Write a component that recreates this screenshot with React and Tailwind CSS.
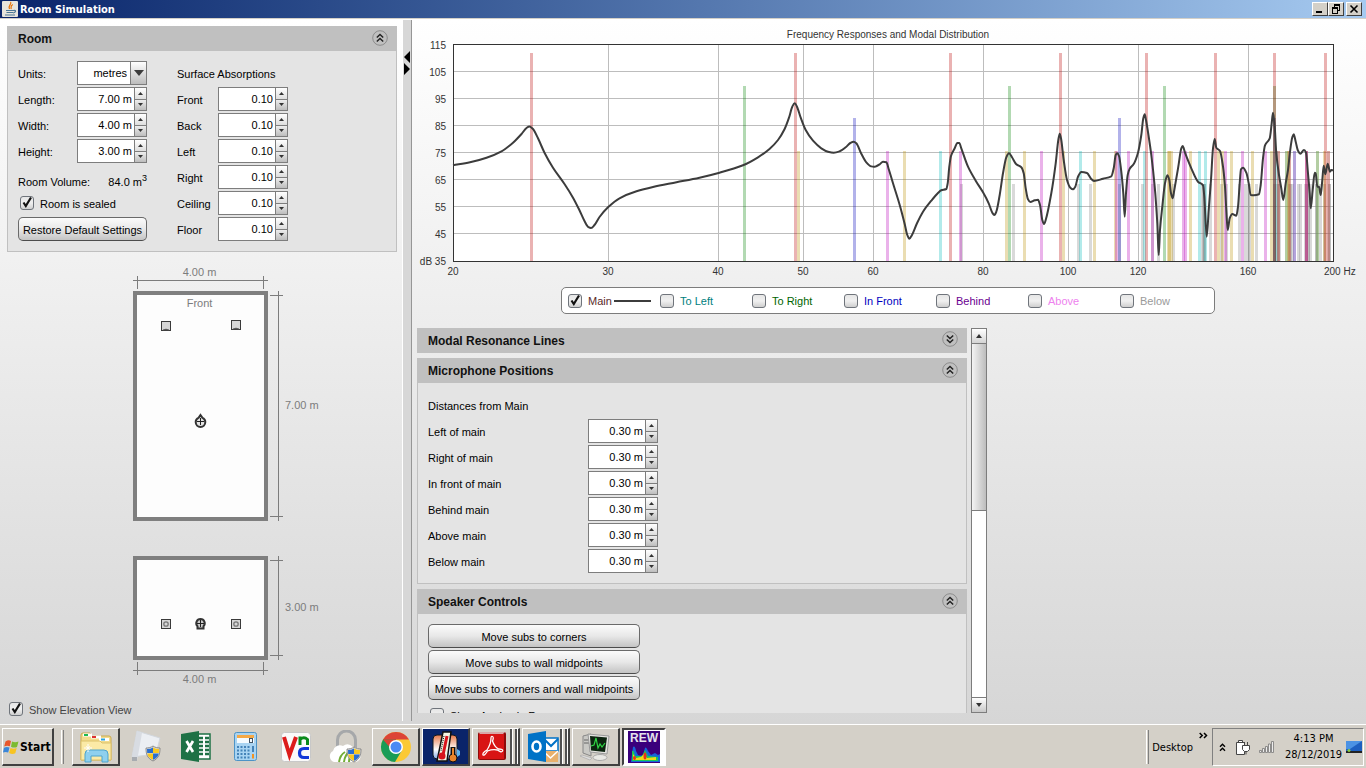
import React, { useId, useState } from "react";

/* ---------- Form controls ---------- */

function Tri({ up, big }) {
  return big ? (
    <svg width="10" height="6" viewBox="0 0 10 6">
      <path d={up ? "M0 6 5 0l5 6z" : "M0 0h10L5 6z"} fill="#3c3c3c" />
    </svg>
  ) : (
    <svg width="5" height="3" viewBox="0 0 5 3">
      <path d={up ? "M0 3 2.500 0 5 3z" : "M0 0h5L2.500 3z"} fill="#333" />
    </svg>
  );
}

function Spinner({ id, value, label }) {
  const [text, setText] = useState(value);
  return (
    <div className="flex h-6 w-[70px] shrink-0 border border-[#7d7d7d] bg-white">
      <input
        id={id}
        value={text}
        onChange={(e) => setText(e.target.value)}
        className="min-w-0 flex-1 bg-white pr-[2px] text-right text-[11px] text-black outline-none"
      />
      <div className="flex w-3 flex-col border-l border-[#7d7d7d]">
        <button aria-label={`Increase ${label}`} className="flex flex-1 items-center justify-center bg-linear-to-b from-white to-[#dedede]">
          <Tri up />
        </button>
        <button aria-label={`Decrease ${label}`} className="flex flex-1 items-center justify-center border-t border-[#7d7d7d] bg-linear-to-b from-[#eeeeee] to-[#bdbdbd]">
          <Tri />
        </button>
      </div>
    </div>
  );
}

function SpinRow({ label, value, labelClass }) {
  const id = useId();
  return (
    <div className="flex h-[26px] items-center">
      <label htmlFor={id} className={`shrink-0 pt-[2px] ${labelClass}`}>{label}</label>
      <Spinner id={id} value={value} label={label} />
    </div>
  );
}

function Check({ label, checked, color = "text-black", children }) {
  return (
    <label className={`flex items-center gap-[6px] ${color}`}>
      <span className="relative block size-[14px] shrink-0">
        <input
          type="checkbox"
          defaultChecked={checked}
          className="peer block size-[14px] appearance-none rounded-[3px] border border-[#6f747b] bg-linear-to-b from-[#e6e6e6] via-[#f0f0f0] to-[#cfcfcf]"
        />
        <svg viewBox="0 0 14 14" className="pointer-events-none absolute inset-0 hidden peer-checked:block">
          <path d="M3.500 6.500 5.800 10 11 1.500" fill="none" stroke="#111" strokeWidth="2.200" />
        </svg>
      </span>
      <span className="pt-[2px]">{label}</span>
      {children}
    </label>
  );
}

function PushButton({ children, className }) {
  return (
    <button className={`h-6 rounded-[5px] border border-[#6a6a6a] border-b-[#4c4c4c] bg-linear-to-b from-[#fbfbfb] via-[#e8e8e8] to-[#c4c4c4] pt-[2px] text-center whitespace-nowrap text-black ${className}`}>
      {children}
    </button>
  );
}

function Section({ title, open, children }) {
  return (
    <section className="shrink-0 border border-[#c0c0c0] bg-[#e4e4e4]">
      <header className={`flex items-center justify-between bg-[#c0c0c0] pr-2 pl-[10px] ${open ? "h-6" : "h-[23px]"}`}>
        <h2 className="text-[12px] font-bold text-[#111]">{title}</h2>
        <button aria-label={`Toggle ${title}`} className="mb-[3px] flex size-4 items-center justify-center">
          <svg width="16" height="16" viewBox="0 0 16 16" fill="none">
            <circle cx="8" cy="8" r="7.300" stroke="#8c8c8c" />
            <path
              d={open ? "M4.800 7.500 8 4.500l3.200 3M4.800 11.500 8 8.500l3.200 3" : "M4.800 4.500 8 7.500l3.200-3M4.800 8.500 8 11.500l3.200-3"}
              stroke="#222"
              strokeWidth="1.500"
            />
          </svg>
        </button>
      </header>
      {children}
    </section>
  );
}

/* ---------- Left side ---------- */

const SURFACES = ["Front", "Back", "Left", "Right", "Ceiling", "Floor"];

function RoomForm() {
  return (
    <Section title="Room" open>
      <div className="flex px-[10px] pt-[9px] pb-[9px]">
        <div className="flex w-[159px] flex-col">
          <div className="flex h-[26px] items-center">
            <label htmlFor="units" className="w-[59px] pt-[2px]">Units:</label>
            <div className="relative h-6 w-[70px] border border-[#7d7d7d] bg-white">
              <select id="units" defaultValue="metres" className="h-full w-full appearance-none pt-px pr-[19px] text-right text-[11px] text-black outline-none [text-align-last:right]">
                <option>metres</option>
                <option>feet</option>
              </select>
              <span className="pointer-events-none absolute inset-y-0 right-0 flex w-4 items-center justify-center border-l border-[#7d7d7d] bg-linear-to-b from-white to-[#bdbdbd]">
                <Tri big />
              </span>
            </div>
          </div>
          <SpinRow label="Length:" value="7.00 m" labelClass="w-[59px]" />
          <SpinRow label="Width:" value="4.00 m" labelClass="w-[59px]" />
          <SpinRow label="Height:" value="3.00 m" labelClass="w-[59px]" />
          <div className="flex h-[30px] w-[129px] items-center justify-between pt-[6px]">
            <span>Room Volume:</span>
            <span>84.0 m<sup className="-top-[5px] text-[9px]">3</sup></span>
          </div>
          <div className="flex h-[22px] items-center pb-1 pl-[2px]">
            <Check label="Room is sealed" checked />
          </div>
          <div className="flex h-[26px] items-center">
            <PushButton className="w-[129px]">Restore Default Settings</PushButton>
          </div>
        </div>
        <div className="flex flex-col">
          <div className="flex h-[26px] items-center pt-[2px]">Surface Absorptions</div>
          {SURFACES.map((s) => (
            <SpinRow key={s} label={s} value="0.10" labelClass="w-[41px]" />
          ))}
        </div>
      </div>
    </Section>
  );
}

function RoomViews() {
  return (
    <svg viewBox="0 0 200 430" className="w-[200px]" fontFamily="'Liberation Sans', Arial, sans-serif" fontSize="11" fill="#7c7c7c">
      <g stroke="#7c7c7c" fill="none" shapeRendering="crispEdges">
        <path d="M13 20.500h135M17.500 16v13M143.500 16v13M150 35.500h13M150 256.500h13M158.500 31v230" />
        <path d="M13 410.500h135M17.500 402v13M143.500 402v13M150 300.500h13M150 395.500h13M158.500 296v104" />
      </g>
      <g stroke="#7f7f7f" strokeWidth="4" fill="#fdfdfd" shapeRendering="crispEdges">
        <rect x="15" y="33" width="131" height="226" />
        <rect x="15" y="298" width="131" height="100" />
      </g>
      <text x="79.500" y="16" textAnchor="middle">4.00 m</text>
      <text x="79.500" y="47" textAnchor="middle">Front</text>
      <text x="165" y="149">7.00 m</text>
      <text x="165" y="351">3.00 m</text>
      <text x="79.500" y="423" textAnchor="middle">4.00 m</text>
      {[[41.5, 61.5], [111.5, 60.5]].map(([x, y]) => (
        <g key={x}>
          <rect x={x} y={y} width="9" height="9" fill="#d6d6d6" stroke="#3a3a3a" />
          <path d={`M${x + 1.5} ${y + 8.5}q3-2 6 0z`} fill="#555" stroke="#555" strokeWidth=".5" />
        </g>
      ))}
      {[41.5, 111.5].map((x) => (
        <g key={x} stroke="#3a3a3a">
          <rect x={x} y="359.500" width="9" height="9" fill="#d6d6d6" />
          <circle cx={x + 4.5} cy="364" r="2.200" fill="none" stroke="#777" strokeWidth="1.300" />
        </g>
      ))}
      <path d="M80.500 155l1.800 2.600q3 1.400 3 4.400a4.800 5 0 0 1-9.600 0q0-3 3-4.400z" fill="#e4e4e4" stroke="#333" strokeWidth="2" />
      <path d="M77 161.500h7M80.500 158v7" stroke="#222" fill="none" />
      <path d="M80.500 359a4.300 4.300 0 0 1 3 7.300v2.200h-6v-2.200a4.300 4.300 0 0 1 3-7.300z" fill="#ccc" stroke="#333" strokeWidth="2" />
      <path d="M77 363.500h7M80.500 360v7" stroke="#222" fill="none" />
    </svg>
  );
}

/* ---------- Frequency chart ---------- */

const fx = (f) => 880 * Math.log10(f / 20);

const SPEED = 343;
const DIMS = [7, 4, 3];

function roomModes() {
  const out = [];
  for (let l = 0; l < 9; l++)
    for (let w = 0; w < 6; w++)
      for (let h = 0; h < 5; h++) {
        const f = (SPEED / 2) * Math.hypot(l / DIMS[0], w / DIMS[1], h / DIMS[2]);
        if (f < 20 || f > 198.5) continue;
        const n = (l > 0) + (w > 0) + (h > 0);
        let color = "#808080";
        let top = 140;
        if (n === 1) {
          color = l ? "#b80000" : w ? "#008000" : "#0000b8";
          top = l ? 9 : w ? 42 : 74;
        } else if (n === 2) {
          color = !h ? "#b89000" : !w ? "#b800b8" : "#00b8b8";
          top = 107;
        }
        out.push({ key: `${l}${w}${h}`, x: Math.round(fx(f)) - 1, color, top, n });
      }
  return out.sort((a, b) => b.n - a.n);
}

const MODES = roomModes();

const CURVE = [
  [0, 121.3], [17, 118.3], [33.5, 113.7], [48.5, 107.3], [60, 98.7], [68.5, 90], [73.5, 84], [76.5, 82.5], [80, 85], [85, 94.3], [91.5, 108.7],
  [100, 123.7], [111.5, 140], [120, 153.7], [126, 165.3], [131.5, 177], [135.5, 183.2], [138, 184], [141.5, 181], [146.5, 173], [155, 163.3],
  [166.5, 154.3], [183.5, 147.3], [200, 143], [223.5, 138.3], [246.5, 133.7], [266.5, 128.7], [290, 121.3], [305, 113.3], [316.5, 105],
  [325, 96], [331.5, 85.3], [336, 73.7], [339.3, 62.7], [341.7, 59.3], [344, 62.7], [347.7, 73.7], [352.7, 86], [360, 96.7], [368.3, 104.3],
  [375, 107.7], [380.7, 108.7], [386.7, 107.3], [392.7, 103.3], [397.3, 99], [400.7, 97.7], [403.3, 99.3], [408.3, 109.7], [413.3, 118.3],
  [418.3, 122.4], [421, 122.8], [423.3, 122.2], [426.7, 120.3], [430, 117.7], [433.3, 118.3], [436, 126], [440, 139.3], [446.7, 161], [451.7, 180],
  [454.3, 191], [456.3, 194.7], [459, 191], [464, 179.3], [470, 167.7], [478.3, 156.7], [485, 149], [488.3, 146.3], [493.3, 145],
  [494.7, 139.3], [496.3, 122.7], [498, 112], [501.7, 104.3], [504.3, 99], [506.3, 99], [508.3, 104.3], [515, 122.7], [523.3, 137.7],
  [530, 148.3], [535.7, 159.3], [539.3, 168.7], [541.3, 171], [543.3, 167.7], [546.7, 151], [550, 129.3], [553.3, 113.3], [556, 109.3],
  [559, 113.3], [563.3, 120.3], [568.3, 123.3], [570.7, 129.3], [572.7, 144.3], [575, 155.3], [577.3, 158], [581.7, 156.3], [585, 155.7],
  [587, 161], [589.3, 176], [591, 180], [592.7, 176], [598.3, 149.3], [602.7, 119.3], [605.3, 96], [606.7, 89.7], [608, 94.3], [610.7, 116],
  [614, 136], [617.3, 143.7], [620, 145.3], [622.3, 142.7], [625, 132.7], [628.3, 128], [634, 129], [638, 134.7], [641, 137], [650, 134.7],
  [658.3, 132.3], [660.7, 124.3], [662.7, 111], [664.3, 109.3], [666, 112], [668.3, 127.7], [670.3, 149.3], [671.7, 172.7], [673, 149.3],
  [674.7, 131], [676.7, 124.7], [680.7, 120], [685, 108.7], [688.3, 91], [690.3, 74.3], [691.7, 70.3], [693, 76], [695.7, 92.7],
  [698.3, 111], [701.7, 142.7], [704.3, 179.3], [705.7, 211], [707, 186], [709.3, 162.7], [712, 139.3], [714.3, 131.3], [716.3, 136],
  [718, 149.3], [719.7, 154.3], [721.3, 146], [725.3, 122.7], [728.3, 104.3], [729.7, 102], [732, 108.7], [738.3, 124.3], [745, 137.7],
  [750, 141.3], [751.3, 152.7], [753.7, 192.7], [755.7, 166], [758, 136], [760, 104.3], [761.7, 95], [763.3, 103.7], [767, 107],
  [770, 122.7], [772, 142.7], [773.3, 166], [774.7, 186], [776.7, 174.3], [779.3, 170], [783.3, 171.7], [785, 162.7], [786.7, 139.3],
  [788, 125.3], [790, 123.7], [793.3, 128.7], [795.7, 139.3], [797.7, 151], [800.7, 151.3], [806, 150.3], [807.7, 141], [810, 114.3],
  [812, 101.3], [816.7, 94.3], [818.7, 79.3], [820, 68.7], [821.7, 82.7], [823.3, 109.3], [826, 131], [828.3, 144.3], [830.3, 156],
  [832.7, 139.3], [835, 126], [837, 107.7], [839.3, 93.3], [840.7, 90.3], [842.7, 97.7], [845, 106.7], [847.3, 109.7], [851, 106],
  [853, 108.7], [855, 129.3], [856.7, 149.3], [857.7, 164.3], [859.7, 146], [861.7, 128.7], [862.7, 129.3], [864.3, 142.7], [866, 142.7],
  [867.7, 151], [869.3, 136], [870.7, 121.7], [872.3, 130.3], [874.7, 119.7], [877, 127.7], [878.3, 126], [880, 126.3],
];

/* Cubic through every point; the tangent is flat wherever the curve turns. */
function smooth(pts) {
  const slope = (a, b) => (b[1] - a[1]) / (b[0] - a[0]);
  const m = pts.map((p, i) => {
    if (i === 0) return slope(p, pts[1]);
    if (i === pts.length - 1) return slope(pts[i - 1], p);
    const a = slope(pts[i - 1], p);
    const b = slope(p, pts[i + 1]);
    return a * b <= 0 ? 0 : (2 * a * b) / (a + b);
  });
  let d = `M${pts[0][0]} ${pts[0][1]}`;
  for (let i = 0; i < pts.length - 1; i++) {
    const [x0, y0] = pts[i];
    const [x1, y1] = pts[i + 1];
    const h = (x1 - x0) / 3;
    d += `C${(x0 + h).toFixed(2)} ${(y0 + m[i] * h).toFixed(2)} ${(x1 - h).toFixed(2)} ${(y1 - m[i + 1] * h).toFixed(2)} ${x1} ${y1}`;
  }
  return d;
}

const CURVE_PATH = smooth(CURVE);
const FREQS = [20, 30, 40, 50, 60, 80, 100, 120, 160];

function Chart() {
  return (
    <svg viewBox="0 0 954 260" className="block w-full shrink-0" fontFamily="'Liberation Sans', Arial, sans-serif" fontSize="10" fill="#333">
      <text x="476" y="18" textAnchor="middle">Frequency Responses and Modal Distribution</text>
      <g transform="translate(41 24)">
        <rect width="881" height="217" fill="#fff" />
        <g shapeRendering="crispEdges">
          {[27, 54, 81, 108, 135, 162, 189].map((y) => (
            <rect key={y} y={y} width="880" height="1" fill="#bdbdbd" />
          ))}
          {FREQS.slice(1).map((f) => (
            <rect key={f} x={Math.round(fx(f))} width="1" height="217" fill="#bdbdbd" />
          ))}
          {MODES.map((m) => (
            <rect key={m.key} x={m.x} y={m.top} width="3" height={217 - m.top} fill={m.color} fillOpacity="0.3" />
          ))}
          <rect x="0.500" y="0.500" width="880" height="217" fill="none" stroke="#333" />
        </g>
        <path d={CURVE_PATH} fill="none" stroke="#3c3c3c" strokeWidth="2" strokeLinejoin="round" />
        {[115, 105, 95, 85, 75, 65, 55, 45, 35].map((v, i) => (
          <text key={v} x="-7" y={5 + i * 27} textAnchor="end">{v === 35 ? "dB 35" : v}</text>
        ))}
        {FREQS.map((f) => (
          <text key={f} x={Math.round(fx(f))} y="231" textAnchor="middle">{f}</text>
        ))}
        <text x="871" y="231">200 Hz</text>
      </g>
    </svg>
  );
}

const LEGEND = [
  ["Main", "text-[#5a2a2a]"],
  ["To Left", "text-[#008080]"],
  ["To Right", "text-[#006400]"],
  ["In Front", "text-[#0000c0]"],
  ["Behind", "text-[#6a0090]"],
  ["Above", "text-[#ee82ee]"],
  ["Below", "text-[#9a9a9a]"],
];

function Legend() {
  return (
    <div className="mt-[7px] flex shrink-0 justify-center pr-[2px]">
      <div className="flex h-[27px] w-[654px] items-center rounded-[5px] border border-[#7c7c7c] bg-white pl-[6px]">
        {LEGEND.map(([label, color], i) => (
          <div key={label} className="w-[92px] shrink-0">
            <Check label={label} color={color} checked={i === 0}>
              {i === 0 && <span className="-ml-1 h-[2px] w-[37px] bg-[#3c3c3c]" />}
            </Check>
          </div>
        ))}
      </div>
    </div>
  );
}

/* ---------- Settings list ---------- */

const MICS = ["Left of main", "Right of main", "In front of main", "Behind main", "Above main", "Below main"];

function Settings() {
  return (
    <div className="mt-[14px] mb-[11px] flex min-h-0 w-full max-w-[575px] flex-1 gap-1 pl-[5px]">
      <div className="flex min-w-0 flex-1 flex-col gap-[5px] overflow-hidden">
        <Section title="Modal Resonance Lines" />
        <Section title="Microphone Positions" open>
          <div className="px-[10px] pt-[9px] pb-[9px]">
            <div className="flex h-[26px] items-center pt-[2px]">Distances from Main</div>
            {MICS.map((m) => (
              <SpinRow key={m} label={m} value="0.30 m" labelClass="w-[160px]" />
            ))}
          </div>
        </Section>
        <Section title="Speaker Controls" open>
          <div className="flex flex-col gap-[2px] px-[10px] pt-[10px] pb-[10px]">
            <PushButton className="w-[212px]">Move subs to corners</PushButton>
            <PushButton className="w-[212px]">Move subs to wall midpoints</PushButton>
            <PushButton className="w-[212px]">Move subs to corners and wall midpoints</PushButton>
            <div className="flex h-6 items-center pt-[2px] pl-[2px]">
              <Check label="Show Angles in Room" />
            </div>
          </div>
        </Section>
      </div>
      <div className="flex w-4 flex-col border border-[#7d7d7d] bg-white">
        <button aria-label="Scroll up" className="flex h-[15px] items-center justify-center border-b border-[#7d7d7d] bg-linear-to-b from-white to-[#d4d4d4]">
          <svg width="6" height="4"><path d="M0 4 3 0l3 4z" fill="#333" /></svg>
        </button>
        <div className="h-[167px] border-b border-[#7d7d7d] bg-linear-to-r from-[#f4f4f4] to-[#bdbdbd]" />
        <div className="flex-1" />
        <button aria-label="Scroll down" className="flex h-[15px] items-center justify-center border-t border-[#7d7d7d] bg-linear-to-b from-white to-[#c8c8c8]">
          <svg width="6" height="4"><path d="M0 0h6L3 4z" fill="#333" /></svg>
        </button>
      </div>
    </div>
  );
}

/* ---------- Window frame ---------- */

function FrameButton({ label, children }) {
  return (
    <button aria-label={label} className="flex h-[14px] w-4 items-center justify-center border border-t-white border-r-[#404040] border-b-[#404040] border-l-white bg-[#d4d0c8]">
      <svg width="12" height="10" viewBox="0 0 12 10" fill="none" stroke="#000" shapeRendering="crispEdges">{children}</svg>
    </button>
  );
}

function TitleBar() {
  return (
    <div className="flex h-[18px] shrink-0 items-center bg-linear-to-r from-[#0a246a] to-[#a6caf0] pr-1 pl-[2px]">
      <svg width="16" height="16" viewBox="0 0 16 16" fill="none">
        <rect width="16" height="16" rx="1" fill="#e8e4dc" />
        <path d="M8.500 1c2 2-3 3.500-1 7M10.800 3.500C8 5 9.500 6 9 8" stroke="#e76f00" strokeWidth="1.200" />
        <path d="M4 9.500h7.500M4.500 11.500h6.500M3 14h10M11.500 9.500c3-.5 2.500 2-.5 2.500" stroke="#4b7796" strokeWidth="1.200" />
      </svg>
      <h1 className="ml-[2px] flex-1 font-['DejaVu_Sans_Condensed','DejaVu_Sans',sans-serif] text-[11px] font-bold text-white">Room Simulation</h1>
      <FrameButton label="Minimize"><path d="M2 7.500h6M2 8.500h6" /></FrameButton>
      <FrameButton label="Restore"><path d="M4 1.500h6M4 .5h6M4.500 1v3M9.500 1v5H8M2 4.500h6M2 3.500h6M2.500 4v5h5V4" /></FrameButton>
      <span className="w-[2px]" />
      <FrameButton label="Close"><path d="M2.500 1.500l7 7M9.500 1.500l-7 7" strokeWidth="1.600" shapeRendering="auto" /></FrameButton>
    </div>
  );
}

/* ---------- Taskbar ---------- */

function Shield({ x, y }) {
  return (
    <g transform={`translate(${x} ${y})`}>
      <path d="M7 0c2 1.500 4.500 2 7 2 0 6-1 10-7 13C1 12 0 8 0 2c2.500 0 5-.5 7-2z" fill="#ddd" stroke="#777" strokeWidth=".8" />
      <path d="M7 1.500V7H1.200Q1 5 1 3 4.500 3 7 1.500z" fill="#2a6fd0" />
      <path d="M7 1.500V7h5.800q.2-2 .2-4-3.500 0-6-1.500z" fill="#f8c820" />
      <path d="M1.200 7.500H7v6.300Q2.200 12 1.200 7.500z" fill="#f8c820" />
      <path d="M12.800 7.500H7v6.300q4.800-1.800 5.800-6.300z" fill="#2a6fd0" />
    </g>
  );
}

const svgProps = { width: 34, height: 34, viewBox: "0 0 34 34", fill: "none" };

const Folder = () => (
  <svg {...svgProps}>
    <path d="M2 30V5q0-2 2-2h7l2 3h17q2 0 2 2v22z" fill="#f2dc8c" stroke="#c9a850" />
    <path d="M4 3.500h9v3H4z" fill="#fff" /><path d="M5 4h4v2H5z" fill="#1db954" />
    <path d="M12 5.500h10v3H12z" fill="#fff" /><path d="M13 6h4v2h-4z" fill="#d33" />
    <path d="M20 8h10v3H20z" fill="#fff" /><path d="M22 8.500h4v2h-4z" fill="#29a3dc" />
    <path d="M2 30V11h19l2 2h9v17z" fill="#fbeaa6" stroke="#dcc16a" />
    <path d="M6 32V24q0-4 4-4h15q4 0 4 4v8h-6v-6H12v6z" fill="#8fd0ee" stroke="#4fa4cc" />
    <path d="M9 14v8M5 18h8" stroke="#fff" />
    <path d="M7 16l4 4M11 16l-4 4" stroke="#fff" strokeWidth=".7" />
  </svg>
);

const Server = () => (
  <svg {...svgProps}>
    <path d="M8 1l-5 26 24-3 4-16z" fill="#eceff3" stroke="#d2d7dd" />
    <path d="M8 1 3 27v4h5l5-28z" fill="#d8dce2" /><path d="M3 27h5v4H3z" fill="#a7abb0" />
    <Shield x={17} y={16} />
  </svg>
);

const Excel = () => (
  <svg {...svgProps}>
    <path d="M18 4h13v25H18z" fill="#fff" stroke="#1e7145" strokeWidth="1.500" />
    <path d="M20 8h4M26 8h4M20 12h4M26 12h4M20 16h4M26 16h4M20 20h4M26 20h4M20 24h4M26 24h4" stroke="#1e7145" strokeWidth="2.500" />
    <path d="M2 4l18-3v31L2 29z" fill="#1e7145" />
    <path d="M7.500 11 14 22M14 11 7.500 22" stroke="#fff" strokeWidth="2.700" />
  </svg>
);

const Calc = () => (
  <svg {...svgProps}>
    <rect x="5.500" y="2.500" width="22" height="28" rx="2" fill="#a9d4f2" stroke="#4d93c6" />
    <path d="M8 5h17v3H8z" fill="#f5a947" /><path d="M8 8h17v5H8z" fill="#f5fbff" />
    <rect x="20.500" y="8.500" width="3" height="4" stroke="#456" />
    <path d="M8 17h14M8 20.500h14M8 24h14M8 27.500h14" stroke="#4583b8" strokeWidth="2" strokeDasharray="2 1.500" />
    <path d="M23 24h2v4.500h-2z" fill="#f39221" /><path d="M23 16h2v6h-2z" fill="#4583b8" />
  </svg>
);

const Vnc = () => (
  <svg {...svgProps}>
    <rect x="2.500" y="2.500" width="29" height="29" rx="3" fill="#fafafa" stroke="#c8c8c8" />
    <path d="M5 7 10.500 25 17 7" stroke="#dc1c1c" strokeWidth="4" />
    <path d="M21 15V6.500M21 9.500q4-3.500 7.500 0V15" stroke="#0a8a1c" strokeWidth="3" />
    <path d="M30 18.500h-5q-4.500 0-4.500 4.500t4.500 4.500h5" stroke="#1138d8" strokeWidth="3.200" />
  </svg>
);

const Vpn = () => (
  <svg {...svgProps}>
    <path d="M8.500 18V10a9 9 0 0 1 18 0v8" stroke="#a6a8aa" strokeWidth="3" />
    <path d="M5 32a6 6 0 0 1-1-11 7 7 0 0 1 10-5q5-4 10 1 9 1 8 8-1 7-6 7z" fill="#fff" />
    <path d="M10 32q1-7 6-10M15 32q1-8 7-12M20 32q0-5 3-8" stroke="#72ad36" strokeWidth="2" />
    <Shield x={18} y={17} />
  </svg>
);

const Chrome = () => (
  <svg {...svgProps}>
    <circle cx="17" cy="17" r="15" fill="#fbc934" />
    <path d="M17 17 4 9.500A15 15 0 0 1 30 9.500H17z" fill="#dc4437" />
    <path d="M4 9.500A15 15 0 0 0 16 32l6.500-11L17 17z" fill="#1a9c57" />
    <path d="M4 9.500 10.500 21 17 17V9.500z" fill="#1a9c57" />
    <path d="M4 9.500h13V17l-6.500 0z" fill="#dc4437" />
    <circle cx="17" cy="17" r="7" fill="#fff" /><circle cx="17" cy="17" r="5.500" fill="#4a8af4" />
  </svg>
);

const Thermo = () => (
  <svg {...svgProps}>
    <defs>
      <linearGradient id="heat" x1="0" y1="0" x2="0" y2="1"><stop stopColor="#e8794a" /><stop offset=".6" stopColor="#fff" /><stop offset="1" stopColor="#7fa8e8" /></linearGradient>
    </defs>
    <rect x="4" y="5" width="24" height="24" rx="4" fill="url(#heat)" stroke="#101820" />
    <path d="M14 2h8l-4 29H8z" fill="#f2f5e4" stroke="#111" strokeWidth="1.500" />
    <path d="M18 6 14 25" stroke="#d8141c" strokeWidth="3" /><circle cx="13" cy="26" r="3.500" fill="#d8141c" />
    <path d="M15 6l-3 15" stroke="#111" strokeDasharray="1 1" />
    <path d="M24 17v10" stroke="#111" strokeWidth="5" /><circle cx="24" cy="28" r="4" fill="#e8842a" stroke="#111" /><path d="M24 18v8" stroke="#e8842a" strokeWidth="2" />
    <path d="M28 19v8l3-2v-4z" fill="#5cb4f0" />
  </svg>
);

const Acrobat = () => (
  <svg {...svgProps}>
    <rect x="2" y="2" width="28" height="28" rx="2" fill="#8e0b0b" /><rect x="3" y="4" width="25" height="25" fill="#d81414" />
    <path d="M2 2h27l-2 2H4z" fill="#d8a8a8" />
    <path d="M7 25q-1-2 4-5 4-6 4-12 0-2 1.500-1.500t0 4.500q2 6 6 8 5 0 4 2t-5-1q-5-1-10 1-3 5-4.500 4z" stroke="#fff" strokeWidth="1.300" />
  </svg>
);

const Outlook = () => (
  <svg {...svgProps}>
    <path d="M18 8h14v13H18z" fill="#fff" stroke="#0072c6" strokeWidth="1.500" /><path d="M19 10l6 6 7-7" stroke="#0072c6" strokeWidth="2" />
    <path d="M17 21h15v11H17z" fill="#e8b06c" /><path d="M17 21l7.500 7 7.500-7" stroke="#fff" strokeWidth="1.500" />
    <path d="M2 4l18-3v31L2 29z" fill="#0072c6" />
    <ellipse cx="10.500" cy="16.500" rx="4" ry="5" stroke="#fff" strokeWidth="2.600" />
  </svg>
);

const Monitor = () => (
  <svg {...svgProps}>
    <path d="M4 6l8-2v22l-8-3z" fill="#c9c9c5" stroke="#888" /><path d="M5 10h5M5 13h5" stroke="#666" />
    <path d="M9 4l21 2 -2 18-17-2z" fill="#e4e4e0" stroke="#999" /><path d="M11 6l17 1.500-2 14.500-14-1.500z" fill="#0c2410" />
    <path d="M12 16l3-1 2-7 2 10 2-4 2 3 3-4" stroke="#2fd845" strokeWidth="1.200" />
    <ellipse cx="21" cy="27.500" rx="7" ry="3" fill="#e8e8e4" stroke="#aaa" /><path d="M3 25l10 3-2 2-10-4z" fill="#ddd" stroke="#999" strokeWidth=".5" />
  </svg>
);

const Rew = () => (
  <svg {...svgProps}>
    <rect x="1" y="1" width="32" height="32" fill="#3a007c" />
    <text x="17" y="12" textAnchor="middle" fill="#e4e4ec" fontFamily="'Liberation Sans', Arial, sans-serif" fontWeight="bold" fontSize="12">REW</text>
    <path d="M4 32q1-8 2-15 2-2 3 4l2 4q3 1 5 0l2-7q1-2 3 3l3 4 4-2 3 2 2-1v8z" fill="#1666d8" />
    <path d="M5 31V21q2-1 3 5l7 0 3-6 3 6 10 1v4z" fill="#18c858" />
    <path d="M6 30V24l3 4 5-1 3-3 3 4 9-1v3z" fill="#f0d818" />
    <ellipse cx="18" cy="26" rx="1.500" ry="3.500" fill="#e83418" /><ellipse cx="7.500" cy="28" rx="1.500" ry="2" fill="#e83418" />
  </svg>
);

const TASKS = [
  ["File Explorer", Folder, "raised"],
  ["Server Manager", Server, "flat"],
  ["Excel", Excel, "flat"],
  ["Calculator", Calc, "flat"],
  ["VNC Viewer", Vnc, "flat"],
  ["VPN Client", Vpn, "flat"],
  ["Chrome", Chrome, "raised"],
  ["Thermometer", Thermo, "navy"],
  ["Acrobat Reader", Acrobat, "stack"],
  ["Outlook", Outlook, "stack"],
  ["System Monitor", Monitor, "raised"],
  ["REW", Rew, "pressed"],
];

const RAISED = "border-t-white border-l-white border-r-[#404040] border-b-[#404040] border-b-2 border-r-2";
const TASK_STYLES = {
  raised: `border ${RAISED}`,
  stack: `border pl-[3px] ${RAISED}`,
  navy: `border ${RAISED} bg-[#0a246a]`,
  flat: "border border-transparent",
  pressed: "border-2 border-t-[#404040] border-l-[#404040] border-r-white border-b-white bg-white",
};

function TaskButton({ label, Icon, kind }) {
  return (
    <button aria-label={label} className={`flex h-[38px] ${kind === "pressed" ? "w-11" : "w-12"} shrink-0 items-center justify-center ${TASK_STYLES[kind]}`}>
      <Icon />
      {kind === "stack" && (
        <span className="flex h-full gap-[2px]">
          <span className="w-[3px] border-r border-white bg-[#505050]" />
          <span className="w-[3px] border-r border-white bg-[#505050]" />
        </span>
      )}
    </button>
  );
}

function TaskBar() {
  return (
    <footer className="flex h-11 shrink-0 items-center border-t border-white bg-[#d4d0c8] pt-px pr-[2px] pl-[2px] font-['DejaVu_Sans_Condensed','DejaVu_Sans',sans-serif] text-[11px] text-black">
      <button className={`flex h-[38px] w-[52px] items-center gap-px border text-[12px] font-bold ${RAISED}`}>
        <svg width="16" height="16" viewBox="0 0 16 16">
          <path d="M2.500 2.500q3-2 5.500-.5L6.800 7.200Q4 6 1.200 7.500z" fill="#e8562a" />
          <path d="M9 2.500q3 1.500 6.500 0L14 8q-3 1.300-6-.3z" fill="#7cbb32" />
          <path d="M1 8.700q2.700-1.500 5.500-.2L5.200 13.500Q2.500 12.300 0 13.500z" fill="#3a86d8" />
          <path d="M7.500 9q3 1.500 6.200 0l-1.400 5.300q-3 1.500-6.200-.3z" fill="#f8c420" />
        </svg>
        Start
      </button>
      <span className="ml-[7px] h-[34px] w-[3px] border-l border-r border-l-white border-r-[#808080]" />
      <nav className="ml-2 flex gap-[2px]">
        {TASKS.map(([label, Icon, kind]) => (
          <TaskButton key={label} label={label} Icon={Icon} kind={kind} />
        ))}
      </nav>
      <div className="flex-1" />
      <span className="h-[34px] w-[3px] border-l border-r border-l-white border-r-[#808080]" />
      <span className="ml-[3px]">Desktop</span>
      <svg width="9" height="7" viewBox="0 0 9 7" className="mb-6 ml-[6px]" fill="none" stroke="#000" strokeWidth="1.500">
        <path d="M.7 1 3.200 3.500.7 6M5 1l2.500 2.500L5 6" />
      </svg>
      <div className="ml-1 flex h-[38px] w-[152px] items-center border border-t-[#808080] border-r-white border-b-white border-l-[#808080] pl-[6px]">
        <svg width="7" height="9" viewBox="0 0 7 9" fill="none" stroke="#000" strokeWidth="1.400">
          <path d="M1 3.700 3.500 1.200 6 3.700M1 7.700 3.500 5.200 6 7.700" />
        </svg>
        <svg width="16" height="17" viewBox="0 0 16 17" className="ml-[9px]" fill="#fff" stroke="#444">
          <path d="M1.500 3.500h8v12h-8zM3.500 1.500h4v2h-4z" />
          <path d="M7.500 6.500h7v4l-2 2h-3l-2-2zM9.500 3v3.500M12.500 3v3.500M11 12.500v3" />
        </svg>
        <svg width="16" height="12" viewBox="0 0 16 12" className="ml-2" fill="#eee" stroke="#777" strokeWidth=".8">
          <path d="M.5 9.500h2v2h-2zM3.500 7.500h2v4h-2zM6.500 5.500h2v6h-2zM9.500 3h2v8.500h-2zM12.500.5h2v11h-2z" />
        </svg>
        <div className="ml-[10px] flex-1 text-center leading-4 whitespace-nowrap">
          <div>4:13 PM</div>
          <div>28/12/2019</div>
        </div>
        <svg width="16" height="12" viewBox="0 0 16 12" className="mr-px ml-1">
          <path d="M0 0h16v10H0z" fill="#1d5fc0" /><path d="M0 0h16L4 8H0z" fill="#4b92e4" />
          <path d="M0 10h16v2H0z" fill="#222" /><circle cx="3" cy="9.500" r="1.500" fill="#8bd03c" />
        </svg>
      </div>
    </footer>
  );
}

export default function App() {
  return (
    <div className="flex h-screen min-h-[600px] flex-col overflow-hidden bg-[#d4d0c8] font-['Liberation_Sans',Arial,sans-serif] text-[11px] leading-none text-black">
      <TitleBar />
      <main className="mt-px flex min-h-0 flex-1 border-t border-white bg-linear-to-b from-white to-[#d6d6d6]">
        <aside className="flex w-[402px] shrink-0 flex-col px-[5px] pt-[6px] pb-2 pl-[7px]">
          <RoomForm />
          <div className="mt-2 flex justify-center pl-[35px]">
            <RoomViews />
          </div>
          <div className="mt-auto pl-[2px]">
            <Check label="Show Elevation View" checked color="text-[#444]" />
          </div>
        </aside>
        <div className="mb-[3px] w-[10px] shrink-0 border-r border-l border-r-[#969696] border-l-white bg-[#d7d7d7] pt-[31px]">
          <svg width="8" height="24" viewBox="0 0 8 24">
            <path d="M7 0v12L1 6zM1 12v12l6-6z" fill="#000" />
          </svg>
        </div>
        <div className="flex min-w-0 flex-1 flex-col">
          <Chart />
          <Legend />
          <Settings />
        </div>
      </main>
      <TaskBar />
    </div>
  );
}
